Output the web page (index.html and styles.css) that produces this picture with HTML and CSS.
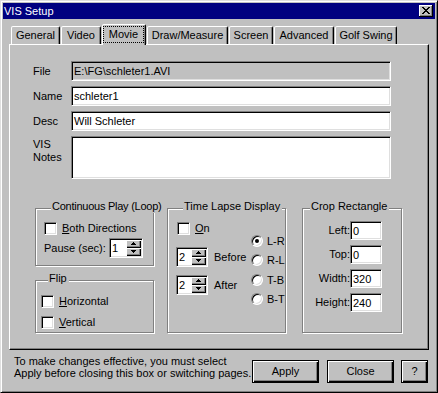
FILE: index.html
```html
<!DOCTYPE html>
<html>
<head>
<meta charset="utf-8">
<title>VIS Setup</title>
<link rel="stylesheet" href="styles.css">
</head>
<body>
<div class="window">
  <div class="titlebar">
    <span class="title">VIS Setup</span>
    <span class="close-btn">
      <svg width="8" height="7" viewBox="0 0 8 7" shape-rendering="crispEdges"><g fill="#000"><rect x="0" y="0" width="2" height="1"/><rect x="6" y="0" width="2" height="1"/><rect x="1" y="1" width="2" height="1"/><rect x="5" y="1" width="2" height="1"/><rect x="2" y="2" width="4" height="1"/><rect x="3" y="3" width="2" height="1"/><rect x="2" y="4" width="4" height="1"/><rect x="1" y="5" width="2" height="1"/><rect x="5" y="5" width="2" height="1"/><rect x="0" y="6" width="2" height="1"/><rect x="6" y="6" width="2" height="1"/></g></svg>
    </span>
  </div>

  <div class="tabs">
    <div class="tab t-general">General</div>
    <div class="tab t-video">Video</div>
    <div class="tab tab-active t-movie"><span class="focus">Movie</span></div>
    <div class="tab t-draw">Draw/Measure</div>
    <div class="tab t-screen">Screen</div>
    <div class="tab t-adv">Advanced</div>
    <div class="tab t-golf">Golf Swing</div>
  </div>

  <div class="panel">
    <div class="fields">
      <div class="row"><span class="lbl">File</span><div class="edit wide disabled">E:\FG\schleter1.AVI</div></div>
      <div class="row"><span class="lbl">Name</span><div class="edit wide">schleter1</div></div>
      <div class="row"><span class="lbl">Desc</span><div class="edit wide">Will Schleter</div></div>
      <div class="row row-notes"><span class="lbl">VIS<br>Notes</span><div class="edit wide notes"></div></div>
    </div>

    <div class="groups">
      <div class="col">
        <div class="group g-loop">
          <div class="gtitle">Continuous Play (Loop)</div>
          <div class="check-row"><span class="check"></span><span><u>B</u>oth Directions</span></div>
          <div class="pause-row">
            <span class="pause-lbl">Pause (sec):</span>
            <div class="spin s-pause">
              <span class="spin-val">1</span>
              <span class="spin-btns">
                <span class="sb"><svg width="5" height="3" viewBox="0 0 5 3" shape-rendering="crispEdges"><path d="M2 0h1v1h1v1h1v1H0V2h1V1h1z"/></svg></span>
                <span class="sb"><svg width="5" height="3" viewBox="0 0 5 3" shape-rendering="crispEdges"><path d="M0 0h5v1H4v1H3v1H2V2H1V1H0z"/></svg></span>
              </span>
            </div>
          </div>
        </div>
        <div class="group g-flip">
          <div class="gtitle">Flip</div>
          <div class="check-row first"><span class="check"></span><span><u>H</u>orizontal</span></div>
          <div class="check-row second"><span class="check"></span><span><u>V</u>ertical</span></div>
        </div>
      </div>

      <div class="group g-time">
        <div class="gtitle">Time Lapse Display</div>
        <div class="tl-body">
          <div class="tl-left">
            <div class="check-row tl-on"><span class="check"></span><span><u>O</u>n</span></div>
            <div class="tl-spin-row before">
              <div class="spin s-tl">
                <span class="spin-val">2</span>
                <span class="spin-btns">
                  <span class="sb"><svg width="5" height="3" viewBox="0 0 5 3" shape-rendering="crispEdges"><path d="M2 0h1v1h1v1h1v1H0V2h1V1h1z"/></svg></span>
                  <span class="sb"><svg width="5" height="3" viewBox="0 0 5 3" shape-rendering="crispEdges"><path d="M0 0h5v1H4v1H3v1H2V2H1V1H0z"/></svg></span>
                </span>
              </div>
              <span class="tl-lbl">Before</span>
            </div>
            <div class="tl-spin-row after">
              <div class="spin s-tl">
                <span class="spin-val">2</span>
                <span class="spin-btns">
                  <span class="sb"><svg width="5" height="3" viewBox="0 0 5 3" shape-rendering="crispEdges"><path d="M2 0h1v1h1v1h1v1H0V2h1V1h1z"/></svg></span>
                  <span class="sb"><svg width="5" height="3" viewBox="0 0 5 3" shape-rendering="crispEdges"><path d="M0 0h5v1H4v1H3v1H2V2H1V1H0z"/></svg></span>
                </span>
              </div>
              <span class="tl-lbl">After</span>
            </div>
          </div>
          <div class="tl-right">
            <div class="radio-row"><span class="radio on"></span><span>L-R</span></div>
            <div class="radio-row"><span class="radio"></span><span>R-L</span></div>
            <div class="radio-row r3"><span class="radio"></span><span>T-B</span></div>
            <div class="radio-row"><span class="radio"></span><span>B-T</span></div>
          </div>
        </div>
      </div>

      <div class="group g-crop">
        <div class="gtitle">Crop Rectangle</div>
        <div class="crop-row"><span class="crop-lbl">Left:</span><div class="edit crop-edit">0</div></div>
        <div class="crop-row"><span class="crop-lbl">Top:</span><div class="edit crop-edit">0</div></div>
        <div class="crop-row"><span class="crop-lbl">Width:</span><div class="edit crop-edit">320</div></div>
        <div class="crop-row"><span class="crop-lbl">Height:</span><div class="edit crop-edit">240</div></div>
      </div>
    </div>
  </div>

  <div class="footer">
    <div class="note">To make changes effective, you must select<br>Apply before closing this box or switching pages.</div>
    <div class="btn b-apply">Apply</div>
    <div class="btn b-close">Close</div>
    <div class="btn b-help">?</div>
  </div>
</div>
</body>
</html>
```
FILE: styles.css
```css
* { box-sizing: border-box; }
html, body { margin: 0; padding: 0; }
body {
  width: 438px;
  height: 393px;
  background: #c0c0c0;
  font-family: "Liberation Sans", Arial, sans-serif;
  font-size: 11px;
  line-height: 13px;
  color: #000;
  overflow: hidden;
}
u { text-decoration: underline; text-underline-offset: 1px; }

.window {
  width: 438px;
  height: 393px;
  border: 1px solid;
  border-color: #dfdfdf #000 #000 #dfdfdf;
  box-shadow: inset 1px 1px #fff, inset -1px -1px #808080;
  padding: 2px;
  background: #c0c0c0;
  display: flex;
  flex-direction: column;
}

/* title bar */
.titlebar {
  height: 16px;
  background: #000080;
  color: #fff;
  display: flex;
  justify-content: space-between;
  align-items: flex-start;
  padding: 0 2px 0 1px;
  flex: none;
}
.title { line-height: 16px; }
.close-btn {
  margin-top: 2px;
  width: 14px;
  height: 12px;
  background: #c0c0c0;
  box-shadow: inset -1px -1px #000, inset 1px 1px #fff, inset -2px -2px #808080;
  display: flex;
  align-items: center;
  justify-content: center;
  padding: 0 1px 1px 0;
}
.close-btn svg { display: block; }

/* tabs */
.tabs {
  display: flex;
  align-items: flex-end;
  gap: 1px;
  margin: 5px 0 0 8px;
  height: 20px;
  position: relative;
  z-index: 1;
  flex: none;
}
.tab {
  height: 18px;
  border: 1px solid;
  border-bottom: 0;
  border-color: #fff #000 transparent #fff;
  border-radius: 2px 2px 0 0;
  box-shadow: inset -1px 0 #808080;
  display: flex;
  align-items: flex-start;
  justify-content: center;
  padding-top: 2px;
  background: #c0c0c0;
  white-space: nowrap;
}
.tab-active {
  height: 21px;
  margin-bottom: -1px;
  padding: 1px 1px 0 0;
}
.focus {
  flex: 1;
  height: 17px;
  border: 1px dotted #000;
  text-align: center;
  padding-top: 1px;
}
.t-general { width: 49px; }
.t-video { width: 40px; }
.t-movie { width: 44px; }
.t-draw { width: 81px; }
.t-screen { width: 44px; }
.t-adv { width: 60px; }
.t-golf { width: 62px; }

/* panel */
.panel {
  margin-left: 6px;
  width: 420px;
  height: 306px;
  border: 1px solid;
  border-color: #fff #000 #000 #fff;
  box-shadow: inset -1px -1px #808080;
  flex: none;
}
.fields { padding: 16px 0 0 23px; }
.row {
  display: flex;
  align-items: center;
  height: 20px;
  margin-bottom: 5px;
}
.row-notes {
  height: 43px;
  align-items: flex-start;
  margin-bottom: 0;
}
.lbl { width: 38px; flex: none; }
.row-notes .lbl { padding-top: 2px; }

.edit {
  border: 1px solid;
  border-color: #808080 #fff #fff #808080;
  box-shadow: inset 1px 1px #000, inset -1px -1px #dfdfdf;
  background: #fff;
  padding: 1px 2px 0 2px;
  line-height: 17px;
  white-space: nowrap;
  overflow: hidden;
}
.wide { width: 320px; height: 20px; }
.disabled { background: #c0c0c0; }
.notes { height: 43px; }

/* group boxes */
.groups {
  display: flex;
  align-items: flex-start;
  margin-top: 29px;
  padding-left: 25px;
}
.col { display: flex; flex-direction: column; width: 119px; flex: none; }
.group {
  border: 1px solid #808080;
  box-shadow: inset 1px 1px #fff, 1px 1px #fff;
  flex: none;
}
.gtitle {
  display: table;
  margin: -9px 0 0 7px;
  padding: 0 2px 0 1px;
  background: #c0c0c0;
  line-height: 13px;
  white-space: nowrap;
}
.g-loop { width: 119px; height: 58px; padding-left: 8px; }
.g-loop .gtitle { letter-spacing: -0.25px; margin-left: 7px; padding: 0 1px; }
.g-flip { width: 119px; height: 53px; margin-top: 14px; padding-left: 5px; }
.g-time { width: 119px; height: 125px; margin-left: 13px; padding-left: 8px; }
.g-crop { width: 100px; height: 125px; margin-left: 16px; }

.check-row {
  display: flex;
  align-items: center;
  gap: 5px;
  height: 13px;
  white-space: nowrap;
}
.g-loop .check-row { margin-top: 9px; }
.g-flip .first { margin-top: 10px; }
.g-flip .second { margin-top: 8px; }
.check {
  width: 13px;
  height: 13px;
  border: 1px solid;
  border-color: #808080 #fff #fff #808080;
  box-shadow: inset 1px 1px #000, inset -1px -1px #dfdfdf;
  background: #fff;
  flex: none;
}

.pause-row {
  display: flex;
  align-items: center;
  height: 20px;
  margin-top: 3px;
}
.pause-lbl { width: 65px; flex: none; white-space: nowrap; }

/* spin boxes */
.spin {
  display: flex;
  height: 20px;
  border: 1px solid;
  border-color: #808080 #fff #fff #808080;
  box-shadow: inset 1px 1px #000, inset -1px -1px #dfdfdf;
  background: #fff;
  padding: 1px;
  flex: none;
}
.s-pause { width: 34px; }
.s-tl { width: 32px; }
.spin-val { flex: 1; padding-left: 1px; line-height: 16px; }
.spin-btns { display: flex; flex-direction: column; width: 15px; flex: none; }
.sb {
  height: 8px;
  background: #c0c0c0;
  box-shadow: inset 1px 1px #fff, inset -1px -1px #000, inset -2px -2px #808080;
  display: flex;
  align-items: center;
  justify-content: center;
  padding: 0 1px 1px 0;
}
.sb svg { display: block; fill: #000; }

/* time lapse */
.tl-body { display: flex; }
.tl-left { width: 75px; flex: none; }
.tl-on { margin: 9px 0 0 1px; }
.tl-spin-row { display: flex; align-items: center; height: 20px; }
.tl-spin-row.before { margin-top: 12px; }
.tl-spin-row.after { margin-top: 8px; }
.tl-lbl { margin-left: 6px; }
.tl-right { padding-top: 22px; display: flex; flex-direction: column; gap: 7px; }
.radio-row { display: flex; align-items: center; gap: 4px; height: 12px; }
.radio-row.r3 { margin-top: 1px; }
.radio {
  width: 12px;
  height: 12px;
  border-radius: 50%;
  border: 1px solid;
  border-color: #808080 #fff #fff #808080;
  box-shadow: inset 1px 1px #000, inset -1px -1px #dfdfdf;
  background: #fff;
  display: flex;
  align-items: center;
  justify-content: center;
  flex: none;
}
.radio.on::after {
  content: "";
  width: 4px;
  height: 4px;
  border-radius: 50%;
  background: #000;
}

/* crop */
.crop-row { display: flex; align-items: center; height: 19px; margin-top: 5px; }
.g-crop .gtitle + .crop-row { margin-top: 8px; }
.crop-lbl { width: 47px; text-align: right; flex: none; }
.crop-edit { width: 32px; height: 19px; line-height: 16px; }

/* footer */
.footer {
  display: flex;
  align-items: flex-start;
  padding: 0 7px 0 11px;
  flex: none;
}
.note { flex: 1; margin-top: 5px; line-height: 12px; white-space: nowrap; }
.btn {
  margin-top: 10px;
  height: 23px;
  border: 1px solid #000;
  box-shadow: inset 1px 1px #fff, inset -1px -1px #000, inset -2px -2px #808080;
  display: flex;
  align-items: center;
  justify-content: center;
  flex: none;
  padding-bottom: 1px;
}
.b-apply { width: 67px; }
.b-close { width: 67px; margin-left: 8px; }
.b-help { width: 27px; margin-left: 7px; }
```
